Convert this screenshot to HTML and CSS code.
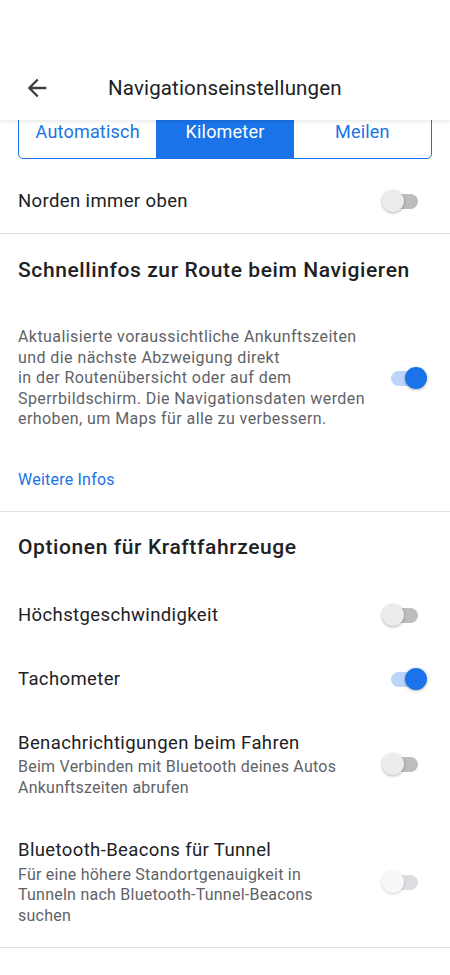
FILE: index.html
```html
<!DOCTYPE html>
<html lang="de">
<head>
<meta charset="utf-8">
<title>Navigationseinstellungen</title>
<link rel="stylesheet" href="styles.css">
</head>
<body>
<header class="appbar">
  <svg class="back" viewBox="0 0 24 24" width="28" height="28"><path d="M20 11H7.83l5.59-5.59L12 4l-8 8 8 8 1.41-1.41L7.83 13H20v-2z" fill="#3c4043"/></svg>
  <h1 class="title">Navigationseinstellungen</h1>
</header>
<main class="content">
  <div class="segmented">
    <div class="seg">Automatisch</div>
    <div class="seg seg-active">Kilometer</div>
    <div class="seg">Meilen</div>
  </div>
  <div class="row row-first">
    <div class="row-text"><div class="row-title">Norden immer oben</div></div>
    <div class="switch"><span class="track"></span><span class="thumb"></span></div>
  </div>
  <div class="divider"></div>
  <section class="section">
    <h2 class="section-title">Schnellinfos zur Route beim Navigieren</h2>
    <div class="row row-para">
      <p class="para">Aktualisierte voraussichtliche Ankunftszeiten<br>und die nächste Abzweigung direkt<br>in der Routenübersicht oder auf dem<br>Sperrbildschirm. Die Navigationsdaten werden<br>erhoben, um Maps für alle zu verbessern.</p>
      <div class="switch on"><span class="track"></span><span class="thumb"></span></div>
    </div>
    <a class="link">Weitere Infos</a>
  </section>
  <div class="divider"></div>
  <section class="section section-list">
    <h2 class="section-title">Optionen für Kraftfahrzeuge</h2>
    <div class="row">
      <div class="row-text"><div class="row-title">Höchstgeschwindigkeit</div></div>
      <div class="switch"><span class="track"></span><span class="thumb"></span></div>
    </div>
    <div class="row">
      <div class="row-text"><div class="row-title">Tachometer</div></div>
      <div class="switch on"><span class="track"></span><span class="thumb"></span></div>
    </div>
    <div class="row">
      <div class="row-text">
        <div class="row-title">Benachrichtigungen beim Fahren</div>
        <div class="row-sub">Beim Verbinden mit Bluetooth deines Autos<br>Ankunftszeiten abrufen</div>
      </div>
      <div class="switch"><span class="track"></span><span class="thumb"></span></div>
    </div>
    <div class="row">
      <div class="row-text">
        <div class="row-title">Bluetooth-Beacons für Tunnel</div>
        <div class="row-sub">Für eine höhere Standortgenauigkeit in<br>Tunneln nach Bluetooth-Tunnel-Beacons<br>suchen</div>
      </div>
      <div class="switch disabled"><span class="track"></span><span class="thumb"></span></div>
    </div>
  </section>
  <div class="divider"></div>
</main>
</body>
</html>
```

FILE: styles.css
```css
* { box-sizing: border-box; }
html, body { margin: 0; padding: 0; background: #fff; }
body {
  font-family: Roboto, "Noto Sans", "Liberation Sans", sans-serif;
  color: #202124;
  width: 450px;
  overflow: hidden;
}
.appbar {
  position: relative;
  z-index: 2;
  height: 120px;
  background: #fff;
  display: flex;
  align-items: flex-end;
  padding: 0 0 18px 23px;
  box-shadow: 0 1px 4px rgba(0,0,0,0.12);
}
.back { display: block; flex: none; margin-right: 57px; }
.title {
  margin: 0;
  font-size: 20.5px;
  letter-spacing: 0.15px;
  font-weight: 400;
  line-height: 28px;
  color: #202124;
}
.content { position: relative; z-index: 1; }
.segmented {
  display: flex;
  margin: -15px 18px 0 18px;
  height: 54px;
  border: 1px solid #1a73e8;
  border-radius: 5px;
  overflow: hidden;
}
.seg {
  flex: 1;
  display: flex;
  align-items: center;
  justify-content: center;
  font-size: 18px;
  letter-spacing: 0.2px;
  color: #1a73e8;
  padding-bottom: 1px;
}
.seg-active { background: #1a73e8; color: #fff; }
.row {
  display: flex;
  align-items: center;
  justify-content: space-between;
}
.row-first { padding: 30px 0 20px 18px; }
.row-text { flex: 1; min-width: 0; }
.row-title { font-size: 18.5px; letter-spacing: 0.38px; line-height: 24px; color: #202124; }
.row-sub { font-size: 16px; letter-spacing: 0.24px; line-height: 20.5px; color: #5f6368; margin-top: 2.5px; }
.divider { height: 1px; background: #e0e0e0; }
.section { padding: 23px 0 21px 18px; }
.section-list { padding-top: 22px; display: flex; flex-direction: column; }
.section-title {
  margin: 0;
  font-size: 21px;
  letter-spacing: 0.6px;
  font-weight: 500;
  line-height: 26px;
  color: #202124;
}
.row-para { margin-top: 44px; }
.para {
  margin: 0;
  font-size: 16px;
  letter-spacing: 0.42px;
  line-height: 20.5px;
  color: #5f6368;
}
.link {
  display: block;
  margin-top: 40px;
  font-size: 16px;
  letter-spacing: 0.22px;
  line-height: 20px;
  color: #1a73e8;
}
.section-list .row { margin-top: 40px; }
.section-list .row:first-of-type { margin-top: 43px; }
.switch {
  position: relative;
  flex: none;
  width: 46px;
  height: 24px;
  margin-right: 22px;
}
.switch .track {
  position: absolute;
  left: 2px;
  top: 5px;
  width: 34px;
  height: 15px;
  border-radius: 8px;
  background: #bdbdbd;
}
.switch .thumb {
  position: absolute;
  left: 0;
  top: 1px;
  width: 22px;
  height: 22px;
  border-radius: 50%;
  background: #ececec;
  box-shadow: 0 1px 3px rgba(0,0,0,0.3);
}
.switch.on .track { left: 9px; background: #bcd5fa; }
.switch.on .thumb { left: 23px; background: #1a73e8; }
.switch.disabled .track { background: #dcdde1; }
.switch.disabled .thumb { background: #f8f8f8; box-shadow: 0 1px 3px rgba(0,0,0,0.2); }
```
